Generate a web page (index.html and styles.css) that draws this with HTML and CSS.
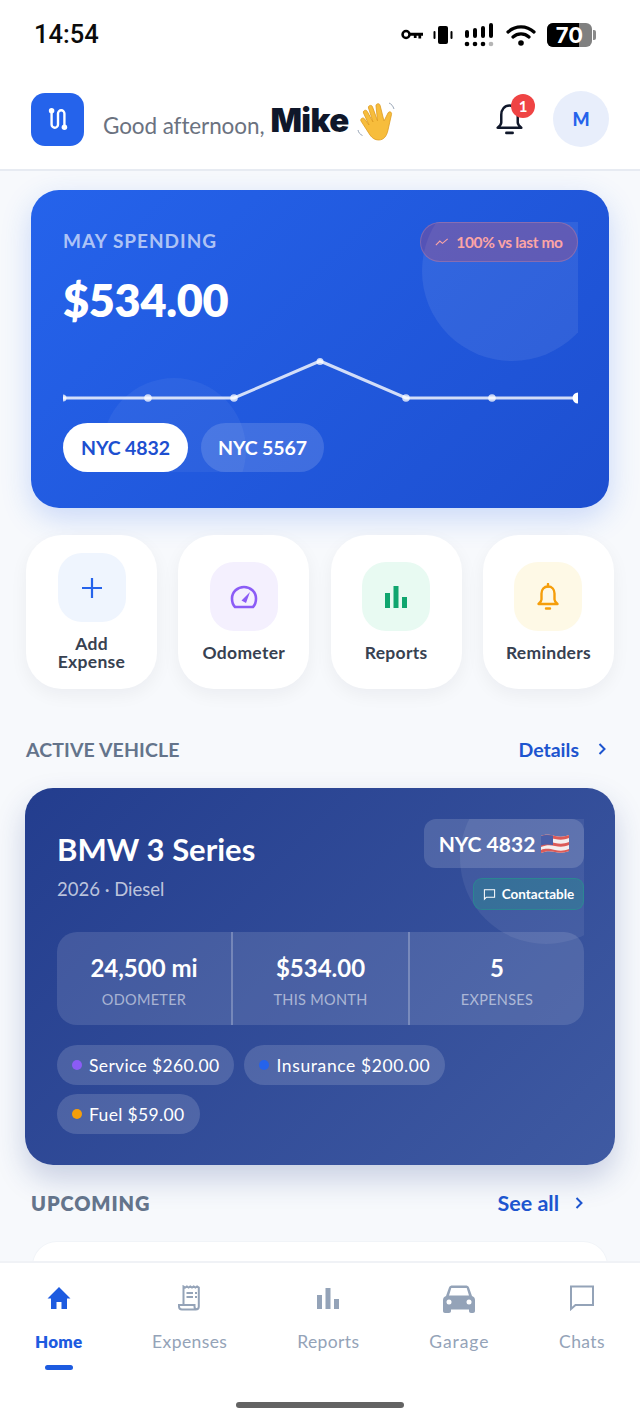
FILE: index.html
```html
<!DOCTYPE html>
<html lang="en">
<head>
<meta charset="utf-8">
<title>Home</title>
<link rel="stylesheet" href="styles.css">
</head>
<body>
<div class="phone">
  <div class="top">
    <div class="status">
      <span class="time">14:54</span>
      <div class="status-icons">
        <svg class="si-key" viewBox="0 0 24 12"><circle cx="5.500" cy="6" r="3.800" fill="none" stroke="#000" stroke-width="2.800"/><path d="M9 4h15v3.400h-2v3h-3v-3h-2v2.400h-3V7.400H9z" fill="#000"/></svg>
        <svg class="si-vib" viewBox="0 0 20 18"><rect x="5" y="0" width="10" height="18" rx="2" fill="#000"/><rect x="0.500" y="5" width="2" height="8" rx="1" fill="#000"/><rect x="17.500" y="5" width="2" height="8" rx="1" fill="#000"/></svg>
        <svg class="si-sig" viewBox="0 0 30 24"><g fill="#000"><rect x="1" y="7" width="4" height="8" rx="2"/><rect x="9" y="5" width="4" height="10" rx="2"/><rect x="17" y="3" width="4" height="12" rx="2"/><rect x="25" y="0" width="4" height="15" rx="2"/><circle cx="3" cy="21" r="2.300"/><circle cx="11" cy="21" r="2.300"/><circle cx="19" cy="21" r="2.300"/></g><circle cx="27" cy="21" r="2.300" fill="#b5b5b5"/></svg>
        <svg class="si-wifi" viewBox="0 0 30 22"><path d="M2 8a19 19 0 0 1 26 0M7 13a12 12 0 0 1 16 0" fill="none" stroke="#000" stroke-width="3.200" stroke-linecap="round"/><circle cx="15" cy="19" r="2.800" fill="#000"/></svg>
        <div class="battery"><div class="bat-body"><div class="bat-fill"></div><span class="bat-text">70</span></div><div class="bat-cap"></div></div>
      </div>
    </div>
    <header class="header">
      <div class="logo">
        <svg viewBox="0 0 24 26" class="logo-svg"><path d="M5 5v14a3.500 3.500 0 0 0 7 0V7a3.500 3.500 0 0 1 7 0v14" fill="none" stroke="#fff" stroke-width="2.600" stroke-linecap="round"/><circle cx="5" cy="4" r="3" fill="#fff"/><circle cx="19" cy="22" r="3" fill="#fff"/></svg>
      </div>
      <div class="greeting">
        <span class="hello">Good afternoon,</span>
        <span class="name">Mike</span>
        <svg class="wave" viewBox="0 0 40 42"><path d="M13 35 4 21c-1.200-2 2-4.200 3.500-2.200L12 25 6.500 13c-1-2.400 2.600-4 3.800-1.500L16 22 11.500 8c-.8-2.500 3-3.800 4-1.200l5 14L19 6c-.3-2.600 3.500-3.200 4.100-.6L27 21l4-8c1.200-2.200 4.200-1 3.500 1.400L31 30c-1.300 6-4 10-9.500 10-3.500 0-6.500-2-8.500-5z" fill="#f7bd3c" stroke="#dd9a1f" stroke-width=".8"/><path d="M32 3c2.500 1 4 3 5 6M1 30c.5 2.500 2 4.500 4.500 5.500" fill="none" stroke="#9aa7b8" stroke-width="1"/></svg>
      </div>
      <div class="header-right">
        <div class="bell">
          <svg viewBox="0 0 28 34" class="bell-svg"><path d="M14 3.500c-5 0-8 4-8 9v7.500c0 2-1.500 3.500-3.500 5h23c-2-1.500-3.500-3-3.500-5v-7.500c0-5-3-9-8-9z" fill="none" stroke="#0f172a" stroke-width="2.400" stroke-linejoin="round"/><path d="M11 30h6" stroke="#0f172a" stroke-width="2.600" stroke-linecap="round"/></svg>
          <span class="bell-badge">1</span>
        </div>
        <div class="avatar">M</div>
      </div>
    </header>
  </div>

  <main class="main">
    <section class="hero">
      <div class="hero-inner">
        <div class="deco deco-a"></div>
        <div class="deco deco-b"></div>
        <div class="hero-top">
          <div>
            <div class="hero-label">MAY SPENDING</div>
            <div class="hero-amount">$534.00</div>
          </div>
          <div class="trend">
            <svg viewBox="0 0 16 10" class="trend-svg"><path d="M1 8.500 5.500 4 8.500 6.500 14.500 1.500" fill="none" stroke="#fca5a5" stroke-width="1.300"/></svg>
            <span>100% vs last mo</span>
          </div>
        </div>
        <svg class="chart" viewBox="0 0 515 44" width="515" height="44">
          <polyline points="0,40 85,40 171,40 257,3 343,40 429,40 515,40" fill="none" stroke="rgba(255,255,255,.8)" stroke-width="3"/>
          <g fill="rgba(255,255,255,.75)"><circle cx="0" cy="40" r="3.500"/><circle cx="85" cy="40" r="3.800"/><circle cx="171" cy="40" r="3.800"/><circle cx="257" cy="3.500" r="3.500"/><circle cx="343" cy="40" r="3.800"/><circle cx="429" cy="40" r="3.800"/></g>
          <circle cx="515" cy="40" r="5.500" fill="#fff"/>
        </svg>
        <div class="hero-chips">
          <span class="chip chip-on">NYC 4832</span>
          <span class="chip">NYC 5567</span>
        </div>
      </div>
    </section>

    <section class="actions">
      <div class="action">
        <div class="a-icon a-blue"><svg viewBox="0 0 24 24" class="a-svg"><path d="M12 2v20M2 12h20" stroke="#2563eb" stroke-width="2.200" fill="none"/></svg></div>
        <div class="a-label">Add<br>Expense</div>
      </div>
      <div class="action">
        <div class="a-icon a-purple"><svg viewBox="0 0 28 24" class="a-svg-l"><path d="M5 22h18c2-2 3-5 3-8.500C26 7 20.500 2 14 2S2 7 2 13.500C2 17 3 20 5 22z" fill="none" stroke="#8b5cf6" stroke-width="2.600" stroke-linejoin="round"/><path d="M11.500 15.500 20 7l-4 11z" fill="#8b5cf6"/></svg></div>
        <div class="a-label">Odometer</div>
      </div>
      <div class="action">
        <div class="a-icon a-green"><svg viewBox="0 0 24 24" class="a-svg-l"><path d="M1 8h5v15H1zM9.500 1h5v22h-5zM18 12h5v11h-5z" fill="#10a56f"/></svg></div>
        <div class="a-label">Reports</div>
      </div>
      <div class="action">
        <div class="a-icon a-yellow"><svg viewBox="0 0 24 28" class="a-svg-b"><path d="M12 3.500c-4 0-6.500 3-6.500 7v6c0 1.800-1.200 3-3 4.500h19c-1.800-1.500-3-2.700-3-4.500v-6c0-4-2.500-7-6.500-7z" fill="none" stroke="#f59e0b" stroke-width="2.400" stroke-linejoin="round"/><path d="M12 1v2.500M10 25.500h4" stroke="#f59e0b" stroke-width="2.400" stroke-linecap="round"/></svg></div>
        <div class="a-label">Reminders</div>
      </div>
    </section>

    <div class="sec sec-active">
      <h2 class="sec-title">ACTIVE VEHICLE</h2>
      <a class="sec-link">Details<svg viewBox="0 0 10 14" class="chev"><path d="M2.500 2 7.500 7l-5 5" fill="none" stroke="#1d55cf" stroke-width="2"/></svg></a>
    </div>

    <section class="vehicle">
      <div class="v-inner">
        <div class="deco deco-c"></div>
        <div class="v-top">
          <div>
            <div class="v-name">BMW 3 Series</div>
            <div class="v-meta">2026 · Diesel</div>
          </div>
          <div class="v-tags">
            <div class="plate">NYC 4832
              <svg class="flag" viewBox="0 0 28 22"><path d="M0 3c5-2 9-1 14 0s9 1 14-1v16c-5 2-9 2-14 1s-9-1-14 1z" fill="#f4eeee"/><path d="M0 3c5-2 9-1 14 0s9 1 14-1v3c-5 2-9 2-14 1S5 5 0 7zM0 10c5-2 9-1 14 0s9 1 14-1v3c-5 2-9 2-14 1s-9-1-14 1zM0 17c5-2 9-1 14 0s9 1 14-1v2c-5 2-9 2-14 1s-9-1-14 1z" fill="#dc5a57"/><path d="M0 3c4-1.600 8-1.200 12-.4v9.400c-4-.8-8-1-12 .6z" fill="#4a5fa8"/></svg>
            </div>
            <div class="contact">
              <svg viewBox="0 0 14 14" class="contact-svg"><path d="M1.500 2h11v8h-9L1.500 12z" fill="none" stroke="#fff" stroke-width="1.100"/></svg>
              Contactable
            </div>
          </div>
        </div>
        <div class="stats">
          <div class="stat"><div class="stat-val">24,500 mi</div><div class="stat-lab">ODOMETER</div></div>
          <div class="stat"><div class="stat-val">$534.00</div><div class="stat-lab">THIS MONTH</div></div>
          <div class="stat"><div class="stat-val">5</div><div class="stat-lab">EXPENSES</div></div>
        </div>
        <div class="pills">
          <span class="pill"><i class="dot dot-purple"></i>Service $260.00</span>
          <span class="pill pill-wide"><i class="dot dot-blue"></i>Insurance $200.00</span>
          <span class="pill"><i class="dot dot-orange"></i>Fuel $59.00</span>
        </div>
      </div>
    </section>

    <div class="sec sec-upcoming">
      <h2 class="sec-title sec-title-b">UPCOMING</h2>
      <a class="sec-link sec-link-b">See all<svg viewBox="0 0 10 14" class="chev"><path d="M2.500 2 7.500 7l-5 5" fill="none" stroke="#1d55cf" stroke-width="2"/></svg></a>
    </div>
    <div class="up-card"></div>
  </main>

  <nav class="nav">
    <div class="nav-items">
      <div class="nav-item nav-on">
        <svg viewBox="0 0 24 24" class="nav-svg"><path d="M12 1 0.500 12.500H4V23h5.500v-7h5v7H20V12.500h3.500z" fill="#1d5be0"/></svg>
        <span class="nav-lab">Home</span>
        <i class="nav-bar"></i>
      </div>
      <div class="nav-item">
        <svg viewBox="0 0 24 26" class="nav-svg"><path d="M5.500 20V1.500l1.700 1 1.700-1 1.700 1 1.700-1 1.700 1 1.700-1 1.700 1 1.700-1 1.700 1V21.500c0 1.800-1 3-3 3H4c-2 0-3-1.200-3-3V20h15.500v1.500c0 1.500.8 3 2.500 3" fill="none" stroke="#94a3b8" stroke-width="2"/><path d="M8.500 8h6.500M8.500 12h6.500M17 8h2M17 12h2" stroke="#94a3b8" stroke-width="2"/></svg>
        <span class="nav-lab">Expenses</span>
      </div>
      <div class="nav-item">
        <svg viewBox="0 0 24 24" class="nav-svg"><path d="M1 9h5v14H1zM9.500 2h5v21h-5zM18 13h5v10h-5z" fill="#94a3b8"/></svg>
        <span class="nav-lab">Reports</span>
      </div>
      <div class="nav-item">
        <svg viewBox="0 0 32 28" class="nav-svg-l"><path d="M6 2.500C6.500 1 8 0.500 9.500 0.500h13c1.500 0 3 .5 3.500 2L29 11c2 .8 3 2 3 4v11c0 1-.8 2-2 2h-2c-1.200 0-2-1-2-2v-1.500H8V26c0 1-.8 2-2 2H2c-1.200 0-2-1-2-2V15c0-2 1-3.200 3-4zM6 10.500h20l-2.300-7.500H8.300z" fill="#94a3b8" fill-rule="evenodd"/><circle cx="6" cy="17" r="2.500" fill="#fff"/><circle cx="26" cy="17" r="2.500" fill="#fff"/></svg>
        <span class="nav-lab">Garage</span>
      </div>
      <div class="nav-item">
        <svg viewBox="0 0 26 26" class="nav-svg-m"><path d="M2 1.500h22v18.500H6.500L2 24z" fill="none" stroke="#94a3b8" stroke-width="2"/></svg>
        <span class="nav-lab">Chats</span>
      </div>
    </div>
    <div class="home-ind"></div>
  </nav>
</div>
</body>
</html>
```

FILE: styles.css
```css
* { box-sizing: border-box; margin: 0; padding: 0; }
html, body { background: #f7f9fc; }
body { font-family: "Lato", "Noto Sans", sans-serif; color: #0f172a; }
.phone { width: 640px; height: 1423px; display: flex; flex-direction: column; overflow: hidden; background: #f7f9fc; }

.top { background: #fff; border-bottom: 2px solid #e7ebf2; height: 171px; flex: none; }
.status { height: 69px; padding: 0 44px 0 34px; display: flex; justify-content: space-between; align-items: center; }
.time { font: 500 25.500px/1 "Roboto", sans-serif; color: #0b0b0b; }
.status-icons { display: flex; align-items: center; gap: 10px; }
.si-key { width: 22px; height: 11px; }
.si-vib { width: 20px; height: 18px; }
.si-sig { width: 30px; height: 24px; margin-left: 1px; }
.si-wifi { width: 30px; height: 22px; margin-left: 2px; }
.battery { display: flex; align-items: center; gap: 1px; margin-left: 1px; }
.bat-body { position: relative; width: 45px; height: 24px; border-radius: 6px; background: #808080; overflow: hidden; display: flex; align-items: center; justify-content: center; }
.bat-fill { position: absolute; left: 0; top: 0; bottom: 0; width: 70%; background: #000; }
.bat-text { position: relative; font: 700 22px/1 "Inter", sans-serif; color: #fff; }
.bat-cap { width: 3px; height: 10px; border-radius: 0 2px 2px 0; background: #8a8a8a; }

.header { height: 100px; padding: 0 31px; display: flex; align-items: center; }
.logo { width: 53px; height: 53px; border-radius: 14px; background: #2563eb; display: flex; align-items: center; justify-content: center; }
.logo-svg { width: 22px; height: 24px; }
.greeting { margin-left: 19px; display: flex; align-items: center; }
.hello { font-size: 22.500px; font-weight: 400; color: #6b7280; margin-top: 12px; letter-spacing: -.1px; }
.name { font: 900 33px/1.2 "Inter", sans-serif; color: #0f172a; margin: 4px 0 0 6px; letter-spacing: -.6px; }
.wave { width: 40px; height: 42px; margin-left: 8px; margin-top: 3px; }
.header-right { margin-left: auto; display: flex; align-items: center; gap: 28px; }
.bell { position: relative; width: 30px; height: 36px; display: flex; align-items: center; }
.bell-svg { width: 29px; height: 35px; }
.bell-badge { position: absolute; right: -10px; top: -7px; width: 24px; height: 24px; border-radius: 50%; background: #ef4444; color: #fff; font-size: 15px; font-weight: 700; display: flex; align-items: center; justify-content: center; }
.avatar { width: 56px; height: 56px; border-radius: 50%; background: #e8eefb; color: #2563eb; font-size: 18px; font-weight: 900; display: flex; align-items: center; justify-content: center; }

.main { flex: 1; min-height: 0; overflow: hidden; padding-top: 19px; }

.hero { margin: 0 31px; height: 318px; border-radius: 28px; padding: 32px 31px 36px 32px; background: linear-gradient(135deg, #2563eb, #1d4fd0); box-shadow: 0 10px 30px rgba(37, 99, 235, .22); }
.hero-inner { position: relative; height: 100%; overflow: hidden; display: flex; flex-direction: column; }
.deco { position: absolute; border-radius: 50%; background: rgba(255, 255, 255, .08); }
.deco-a { left: 359px; top: -41px; width: 180px; height: 180px; }
.deco-b { left: 39px; top: 156px; width: 144px; height: 144px; background: rgba(255, 255, 255, .05); }
.hero-top { position: relative; display: flex; justify-content: space-between; align-items: flex-start; height: 136px; flex: none; }
.hero-label { font-size: 19px; font-weight: 700; letter-spacing: 1px; color: rgba(255, 255, 255, .65); margin-top: 6px; line-height: 26px; }
.hero-amount { font-size: 45px; font-weight: 800; color: #fff; line-height: 54px; margin-top: 19px; letter-spacing: -.3px; }
.trend { width: 158px; height: 40px; border-radius: 20px; border: 1px solid rgba(252, 165, 165, .25); background: rgba(239, 68, 68, .25); color: #fca5a5; display: flex; align-items: center; justify-content: center; gap: 7px; font-size: 15.500px; font-weight: 700; letter-spacing: -.35px; }
.trend-svg { width: 14px; height: 10px; }
.chart { display: block; position: relative; overflow: visible; flex: none; }
.hero-chips { position: relative; margin-top: auto; display: flex; gap: 13px; }
.chip { height: 49px; width: 123px; border-radius: 25px; background: rgba(255, 255, 255, .14); color: #fff; font-size: 19.500px; font-weight: 700; display: flex; align-items: center; justify-content: center; letter-spacing: -.1px; }
.chip-on { background: #fff; color: #1d4fd0; width: 125px; }

.actions { margin: 27px 26px 0; display: grid; grid-template-columns: repeat(4, 131px); justify-content: space-between; }
.action { height: 154px; border-radius: 36px; background: #fff; box-shadow: 0 6px 18px rgba(15, 23, 42, .05); display: flex; flex-direction: column; align-items: center; justify-content: center; gap: 13px; }
.a-icon { width: 68px; height: 69px; border-radius: 24px; display: flex; align-items: center; justify-content: center; }
.a-blue { background: #eff5fe; }
.a-purple { background: #f4f0fe; }
.a-green { background: #e8faf2; }
.a-yellow { background: #fef9e6; }
.a-svg { width: 24px; height: 24px; }
.a-svg-l { width: 28px; height: 24px; }
.a-svg-b { width: 24px; height: 28px; }
.a-label { font-size: 17.500px; font-weight: 700; color: #374151; text-align: center; line-height: 18px; letter-spacing: .3px; }

.sec { display: flex; justify-content: space-between; align-items: center; height: 26px; }
.sec-active { margin: 47px 33px 0 26px; }
.sec-upcoming { margin: 25px 56px 0 31px; }
.sec-title { font-size: 19.500px; font-weight: 700; color: #64748b; letter-spacing: .1px; }
.sec-title-b { font-size: 20px; font-weight: 800; letter-spacing: .9px; }
.sec-link { display: flex; align-items: center; gap: 18px; font-size: 19.500px; font-weight: 700; color: #1d55cf; }
.sec-link-b { font-size: 21.500px; gap: 15px; }
.chev { width: 10px; height: 14px; }

.vehicle { margin: 26px 25px 0; height: 377px; border-radius: 28px; padding: 31px 31px 31px 32px; background: linear-gradient(135deg, #233d8e, #3f5aa2); box-shadow: 0 14px 30px rgba(30, 58, 138, .22); }
.v-inner { position: relative; height: 100%; overflow: hidden; }
.deco-c { left: 403px; top: -47px; width: 172px; height: 172px; background: rgba(255, 255, 255, .07); }
.v-top { position: relative; display: flex; justify-content: space-between; height: 113px; }
.v-name { font-size: 31px; font-weight: 700; color: #fff; line-height: 40px; margin-top: 10px; }
.v-meta { font-size: 18.500px; color: rgba(255, 255, 255, .7); margin-top: 8px; line-height: 24px; }
.v-tags { display: flex; flex-direction: column; align-items: flex-end; gap: 10px; }
.plate { width: 160px; height: 49px; border-radius: 12px; background: rgba(255, 255, 255, .15); color: #fff; font-size: 21px; font-weight: 700; display: flex; align-items: center; justify-content: center; gap: 6px; }
.flag { width: 28px; height: 22px; }
.contact { width: 111px; height: 32px; border-radius: 9px; background: rgba(16, 185, 129, .22); border: 1px solid rgba(16, 185, 129, .3); color: #fff; font-size: 13.500px; font-weight: 700; display: flex; align-items: center; justify-content: center; gap: 6px; }
.contact-svg { width: 13px; height: 13px; }
.stats { position: relative; height: 93px; border-radius: 20px; background: rgba(255, 255, 255, .12); display: grid; grid-template-columns: 174px 177px 176px; }
.stat { display: flex; flex-direction: column; align-items: center; padding-top: 20px; }
.stat + .stat { border-left: 2px solid rgba(255, 255, 255, .25); }
.stat-val { font-size: 24px; font-weight: 700; color: #fff; line-height: 32px; }
.stat-lab { font-size: 14.500px; color: rgba(255, 255, 255, .55); line-height: 20px; margin-top: 6px; letter-spacing: .3px; }
.pills { margin-top: 20px; display: flex; flex-wrap: wrap; gap: 9px 10px; }
.pill { height: 40px; border-radius: 20px; padding: 0 15px; background: rgba(255, 255, 255, .15); color: #fff; font-size: 17.500px; display: flex; align-items: center; gap: 7px; letter-spacing: .35px; }
.pill-wide { letter-spacing: .6px; }
.dot { width: 10px; height: 10px; border-radius: 50%; }
.dot-purple { background: #8b5cf6; }
.dot-blue { background: #2563eb; }
.dot-orange { background: #f59e0b; }

.up-card { margin: 26px 33px 0; height: 120px; border-radius: 24px; background: #fff; box-shadow: 0 0 0 1px #f1f4f8; }

.nav { flex: none; height: 162px; background: #fff; border-top: 2px solid #f0f2f6; position: relative; z-index: 1; }
.nav-items { display: flex; justify-content: space-between; padding: 0 35px; }
.nav-item { display: flex; flex-direction: column; align-items: center; height: 109px; padding-top: 22px; }
.nav-svg { width: 24px; height: 26px; }
.nav-svg-l { width: 32px; height: 28px; margin-bottom: -2px; }
.nav-svg-m { width: 26px; height: 26px; }
.nav-lab { font-size: 17.500px; font-weight: 400; color: #94a3b8; line-height: 24px; letter-spacing: .4px; margin-top: 19px; }
.nav-item:nth-child(4) .nav-lab { letter-spacing: .9px; }
.nav-on .nav-lab { color: #1d5be0; font-weight: 800; font-size: 17px; letter-spacing: .2px; }
.nav-bar { width: 28px; height: 5px; border-radius: 3px; background: #1d5be0; margin-top: 11px; }
.home-ind { width: 168px; height: 6px; border-radius: 3px; background: #636363; margin: 30px auto 0; }
```
